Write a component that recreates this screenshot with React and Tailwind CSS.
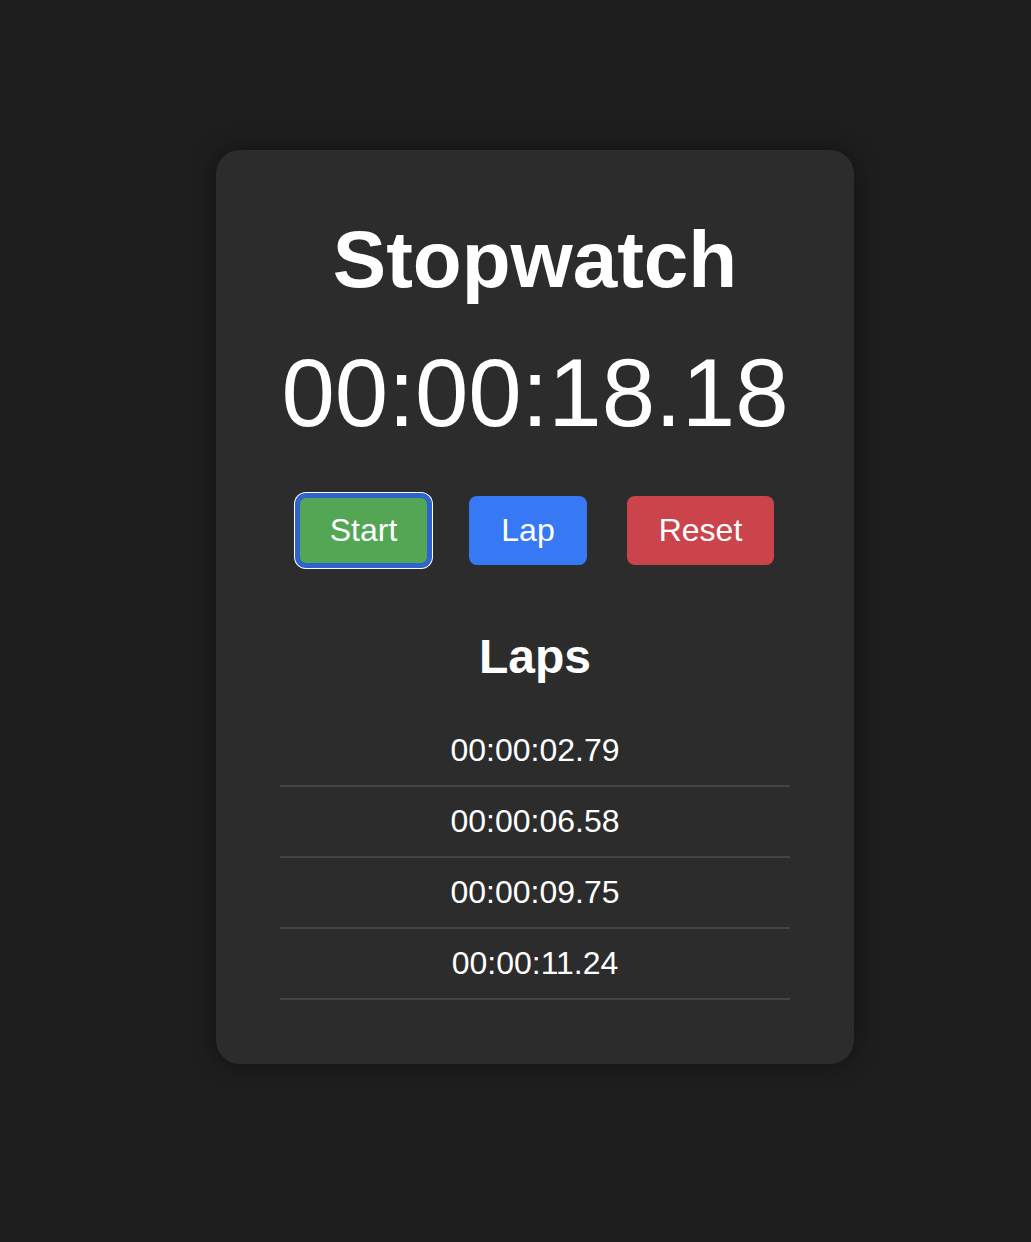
export default function App() {
  const laps = ["00:00:02.79", "00:00:06.58", "00:00:09.75", "00:00:11.24"];

  return (
    <div
      className="min-h-screen bg-[#1e1e1e] pl-[216px] pt-[150px] text-white"
      style={{ fontFamily: '"Liberation Sans", Arial, sans-serif' }}
    >
      <div className="w-[638px] rounded-[24px] bg-[#2c2c2c] p-16 text-center shadow-[0_0_24px_rgba(0,0,0,0.45)]">
        <h1 className="text-[80px] font-bold leading-[92px]">Stopwatch</h1>
        <div className="mt-8 text-[96px] leading-[110px]">00:00:18.18</div>

        <div className="mt-12 flex justify-center gap-10 pl-[2px]">
          <button
            type="button"
            className="rounded-[8px] bg-[#53a653] px-8 py-4 text-[32px] leading-[37px] shadow-[inset_0_0_0_2px_#2d62cf,0_0_0_3px_#2d62cf,0_0_0_4px_#ffffff]"
          >
            Start
          </button>
          <button type="button" className="rounded-[8px] bg-[#3779f5] px-8 py-4 text-[32px] leading-[37px]">
            Lap
          </button>
          <button type="button" className="rounded-[8px] bg-[#cb444b] px-8 py-4 text-[32px] leading-[37px]">
            Reset
          </button>
        </div>

        <h2 className="mt-16 text-[48px] font-bold leading-[55px]">Laps</h2>
        <ul className="mt-8">
          {laps.map((lap) => (
            <li key={lap} className="border-b-2 border-[#444444] py-4 text-[32px] leading-[37px]">
              {lap}
            </li>
          ))}
        </ul>
      </div>
    </div>
  );
}
